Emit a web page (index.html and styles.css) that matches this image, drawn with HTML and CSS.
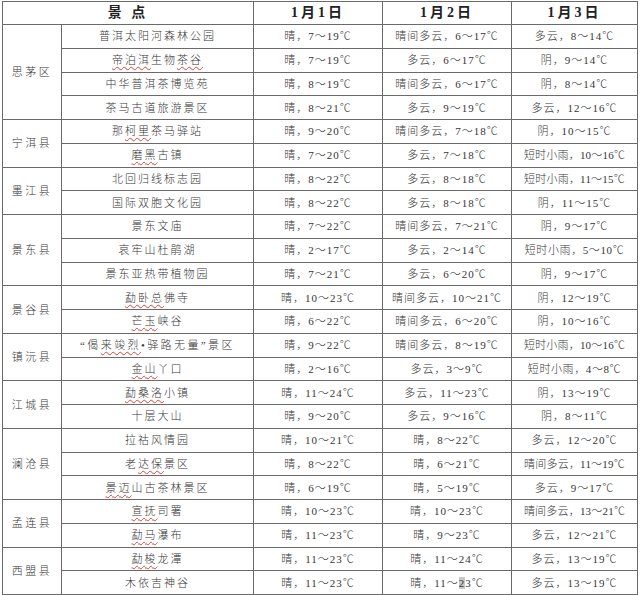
FILE: index.html
```html
<!DOCTYPE html>
<html lang="zh-CN">
<head>
<meta charset="utf-8">
<title>普洱市景区天气预报</title>
<link rel="stylesheet" href="styles.css">
</head>
<body>
<table class="wx">
<colgroup>
<col class="c-county"><col class="c-spot"><col class="c-day"><col class="c-day"><col class="c-last">
</colgroup>
<thead>
<tr><th colspan="2">景 点</th><th>1月1日</th><th>1月2日</th><th>1月3日</th></tr>
</thead>
<tbody>
<tr><td class="county" rowspan="4">思茅区</td><td class="spot">普洱太阳河森林公园</td><td>晴，7～19℃</td><td>晴间多云，6～17℃</td><td>多云，8～14℃</td></tr>
<tr><td class="spot"><u>帝泊洱</u>生物<u>茶谷</u></td><td>晴，7～19℃</td><td>多云，6～17℃</td><td>阴，9～14℃</td></tr>
<tr><td class="spot">中华普洱茶博览苑</td><td>晴，8～19℃</td><td>晴间多云，6～17℃</td><td>阴，8～14℃</td></tr>
<tr><td class="spot">茶马古道旅游景区</td><td>晴，8～21℃</td><td>多云，9～19℃</td><td>多云，12～16℃</td></tr>

<tr><td class="county" rowspan="2">宁洱县</td><td class="spot">那<u>柯里</u>茶马驿站</td><td>晴，9～20℃</td><td>晴间多云，7～18℃</td><td>阴，10～15℃</td></tr>
<tr><td class="spot"><u>磨黑</u>古镇</td><td>晴，7～20℃</td><td>多云，7～18℃</td><td class="tight">短时小雨，10～16℃</td></tr>

<tr><td class="county" rowspan="2">墨江县</td><td class="spot">北回归线标志园</td><td>晴，8～22℃</td><td>多云，8～18℃</td><td class="tight">短时小雨，11～15℃</td></tr>
<tr><td class="spot">国际双胞文化园</td><td>晴，8～22℃</td><td>多云，8～18℃</td><td>阴，11～15℃</td></tr>

<tr><td class="county" rowspan="3">景东县</td><td class="spot">景东文庙</td><td>晴，7～22℃</td><td>晴间多云，7～21℃</td><td>阴，9～17℃</td></tr>
<tr><td class="spot">哀牢山杜鹃湖</td><td>晴，2～17℃</td><td>多云，2～14℃</td><td class="mid">短时小雨，5～10℃</td></tr>
<tr><td class="spot">景东亚热带植物园</td><td>晴，7～21℃</td><td>多云，6～20℃</td><td>阴，9～17℃</td></tr>

<tr><td class="county" rowspan="2">景谷县</td><td class="spot"><u>勐卧总</u>佛寺</td><td>晴，10～23℃</td><td>晴间多云，10～21℃</td><td>阴，12～19℃</td></tr>
<tr><td class="spot"><u>芒玉</u>峡谷</td><td>晴，6～22℃</td><td>晴间多云，6～20℃</td><td>阴，10～16℃</td></tr>

<tr><td class="county" rowspan="2">镇沅县</td><td class="spot quote">“偈<u>来竣烈</u>•驿路无量”景区</td><td>晴，9～22℃</td><td>晴间多云，8～19℃</td><td class="tight">短时小雨，10～16℃</td></tr>
<tr><td class="spot"><u>金山</u>丫口</td><td>晴，2～16℃</td><td>多云，3～9℃</td><td class="mid">短时小雨，4～8℃</td></tr>

<tr><td class="county" rowspan="2">江城县</td><td class="spot"><u>勐桑洛</u>小镇</td><td>晴，11～24℃</td><td>多云，11～23℃</td><td>阴，13～19℃</td></tr>
<tr><td class="spot">十层大山</td><td>晴，9～20℃</td><td>多云，9～16℃</td><td>阴，8～11℃</td></tr>

<tr><td class="county" rowspan="3">澜沧县</td><td class="spot">拉祜风情园</td><td>晴，10～21℃</td><td>晴，8～22℃</td><td>多云，12～20℃</td></tr>
<tr><td class="spot">老<u>达保</u>景区</td><td>晴，8～22℃</td><td>晴，6～21℃</td><td class="tight">晴间多云，11～19℃</td></tr>
<tr><td class="spot"><u>景迈</u>山古茶林景区</td><td>晴，6～19℃</td><td>晴，5～19℃</td><td>多云，9～17℃</td></tr>

<tr><td class="county" rowspan="2">孟连县</td><td class="spot"><u>宣抚</u>司署</td><td>晴，10～23℃</td><td>晴，10～23℃</td><td class="tight">晴间多云，13～21℃</td></tr>
<tr><td class="spot"><u>勐马</u>瀑布</td><td>晴，11～23℃</td><td>晴，9～23℃</td><td>多云，12～21℃</td></tr>

<tr><td class="county" rowspan="2">西盟县</td><td class="spot"><u>勐梭</u>龙潭</td><td>晴，11～23℃</td><td>晴，11～24℃</td><td>多云，13～19℃</td></tr>
<tr><td class="spot">木依吉神谷</td><td>晴，11～23℃</td><td>晴，11～<span class="sel">2</span>3℃</td><td>多云，13～19℃</td></tr>
</tbody>
</table>
</body>
</html>
```

FILE: styles.css
```css
html, body {
  margin: 0;
  padding: 0;
  background: #ffffff;
}

body {
  padding: 1px 0 0 2px;
}

.wx {
  border-collapse: collapse;
  table-layout: fixed;
  width: 636px;
  font-family: "Liberation Serif", "Noto Sans CJK SC", serif;
  color: #363636;
  font-size: 11px;
  font-weight: 300;
}

.c-county { width: 59px; }
.c-spot { width: 192px; }
.c-day { width: 129px; }
.c-last { width: 126px; }

.wx th,
.wx td {
  border: 1px solid #6a6a6a;
  padding: 0;
  text-align: center;
  vertical-align: middle;
  white-space: nowrap;
  overflow: hidden;
  line-height: 14px;
}

.wx th {
  height: 22px;
  font-size: 14px;
  font-weight: 700;
  color: #222222;
  letter-spacing: 3px;
}

.wx tbody tr {
  height: 23.75px;
}

.wx td {
  letter-spacing: 1px;
}

.wx td.spot {
  letter-spacing: 2px;
}

.wx td.county {
  letter-spacing: 2.5px;
}

.wx td.quote {
  letter-spacing: 2.4px;
}

.wx td.tight {
  letter-spacing: 0.2px;
}

.wx td.mid {
  letter-spacing: 0.6px;
}

.wx u {
  text-decoration: underline wavy #e0403a;
  text-decoration-thickness: 1px;
  text-underline-offset: 2px;
}

.sel {
  background: #c8c8c8;
}
```
